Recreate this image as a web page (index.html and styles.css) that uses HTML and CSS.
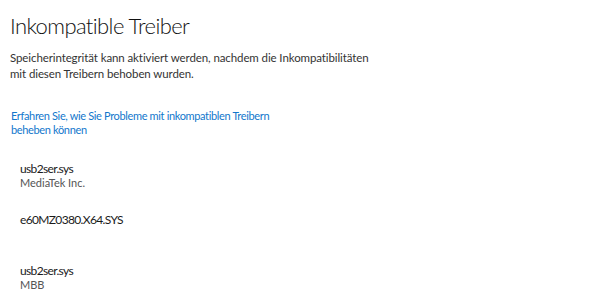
FILE: index.html
```html
<!DOCTYPE html>
<html lang="de">
<head>
<meta charset="utf-8">
<title>Inkompatible Treiber</title>
<link rel="stylesheet" href="styles.css">
</head>
<body>
<main class="page">
  <h1 class="title">Inkompatible Treiber</h1>
  <p class="desc">Speicherintegrität kann aktiviert werden, nachdem die Inkompatibilitäten<br>mit diesen Treibern behoben wurden.</p>
  <a class="link" href="#">Erfahren Sie, wie Sie Probleme mit inkompatiblen Treibern<br>beheben können</a>
  <ul class="drivers">
    <li class="driver">
      <span class="name">usb2ser.sys</span>
      <span class="vendor">MediaTek Inc.</span>
    </li>
    <li class="driver">
      <span class="name">e60MZ0380.X64.SYS</span>
    </li>
    <li class="driver">
      <span class="name">usb2ser.sys</span>
      <span class="vendor">MBB</span>
    </li>
  </ul>
</main>
</body>
</html>
```
FILE: styles.css
```css
html, body {
  margin: 0;
  background: #ffffff;
}
.page {
  font-family: "Lato", "Noto Sans", sans-serif;
  color: #1a1a1a;
  padding: 10px 0 0 10px;
  display: flex;
  flex-direction: column;
  align-items: flex-start;
}
.title {
  margin: 0;
  font-size: 22px;
  font-weight: 300;
  letter-spacing: -0.6px;
  line-height: 32px;
  color: #111;
}
.desc {
  margin: 8px 0 0;
  font-size: 11.5px;
  letter-spacing: -0.1px;
  line-height: 16px;
  color: #333;
}
.link {
  margin: 27px 0 0 1px;
  font-size: 11px;
  letter-spacing: -0.35px;
  line-height: 14px;
  color: #1277cc;
  text-decoration: none;
}
.drivers {
  list-style: none;
  margin: 24px 0 0;
  padding: 0 0 0 10px;
  display: flex;
  flex-direction: column;
}
.driver {
  display: flex;
  flex-direction: column;
  height: 51px;
}
.driver:last-child {
  height: auto;
}
.name {
  font-size: 12px;
  letter-spacing: -0.65px;
  line-height: 15px;
  color: #1a1a1a;
}
.vendor {
  font-size: 11px;
  line-height: 14px;
  color: #555;
}
```
